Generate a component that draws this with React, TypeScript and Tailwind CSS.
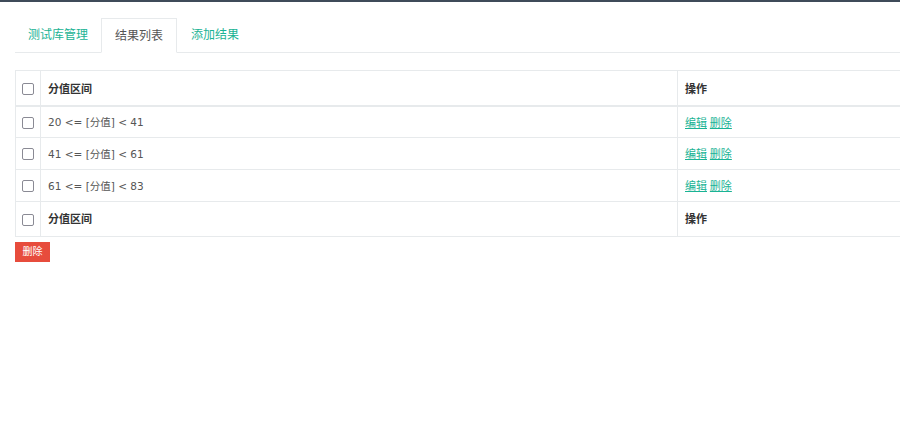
import React from "react";

const rows = [
	{ from: 20, to: 41 },
	{ from: 41, to: 61 },
	{ from: 61, to: 83 },
];

const font = { fontFamily: '"Open Sans", "Noto Sans CJK SC", sans-serif' };
const rangeFont = { fontFamily: '"DejaVu Sans", "Noto Sans CJK SC", sans-serif' };

const Check = () => (
	<span className="inline-block h-[12px] w-[12px] rounded-[2px] border-[1.5px] border-[#8a8a94] bg-white align-middle" />
);

const Tabs = () => (
	<ul className="ml-[15px] flex border-b border-[#e7eaec] text-[12px]">
		<li className="px-[13px] leading-[33px] text-[#1ab394]">测试库管理</li>
		<li className="-mb-px border border-b-white border-[#e7eaec] bg-white px-[13px] leading-[33px] text-[#555]">
			结果列表
		</li>
		<li className="px-[14px] leading-[33px] text-[#1ab394]">添加结果</li>
	</ul>
);

export default function App() {
	return (
		<div className="min-h-[441px] overflow-hidden bg-white text-[#333]" style={font}>
			<div className="h-[2px] bg-[#3f4b59]" />
			<div className="mt-[16px]">
				<Tabs />
			</div>

			<div className="ml-[15px] mt-[17px] w-[920px]">
				<table className="w-full border-collapse border border-[#e7eaec] text-[11px]">
					<thead>
						<tr className="h-[35px] border-b-2 border-[#e7eaec]">
							<th className="w-[25px] border-r border-[#e7eaec] text-center align-middle font-normal">
								<Check />
							</th>
							<th className="w-[637px] border-r border-[#e7eaec] px-[7px] pt-[3px] text-left font-bold text-[#333]">
								分值区间
							</th>
							<th className="px-[7px] pt-[3px] text-left font-bold text-[#333]">操作</th>
						</tr>
					</thead>
					<tbody>
						{rows.map((r) => (
							<tr key={r.from} className="h-[32px] border-b border-[#e7eaec]">
								<td className="border-r border-[#e7eaec] text-center">
									<Check />
								</td>
								<td className="border-r border-[#e7eaec] px-[7px] pt-[2px] text-[10.5px] text-[#555]" style={rangeFont}>
									{r.from} &lt;= [分值] &lt; {r.to}
								</td>
								<td className="px-[7px] pt-[2px]">
									<a className="text-[#1ab394] underline">编辑</a>{" "}
									<a className="text-[#1ab394] underline">删除</a>
								</td>
							</tr>
						))}
					</tbody>
					<tfoot>
						<tr className="h-[35px]">
							<th className="border-r border-[#e7eaec] text-center font-normal">
								<Check />
							</th>
							<th className="border-r border-[#e7eaec] px-[7px] text-left font-bold text-[#333]">
								分值区间
							</th>
							<th className="px-[7px] text-left font-bold text-[#333]">操作</th>
						</tr>
					</tfoot>
				</table>
				<button className="mt-[4px] h-[20px] w-[35px] bg-[#e74c3c] text-[10px] text-white">删除</button>
			</div>
		</div>
	);
}
